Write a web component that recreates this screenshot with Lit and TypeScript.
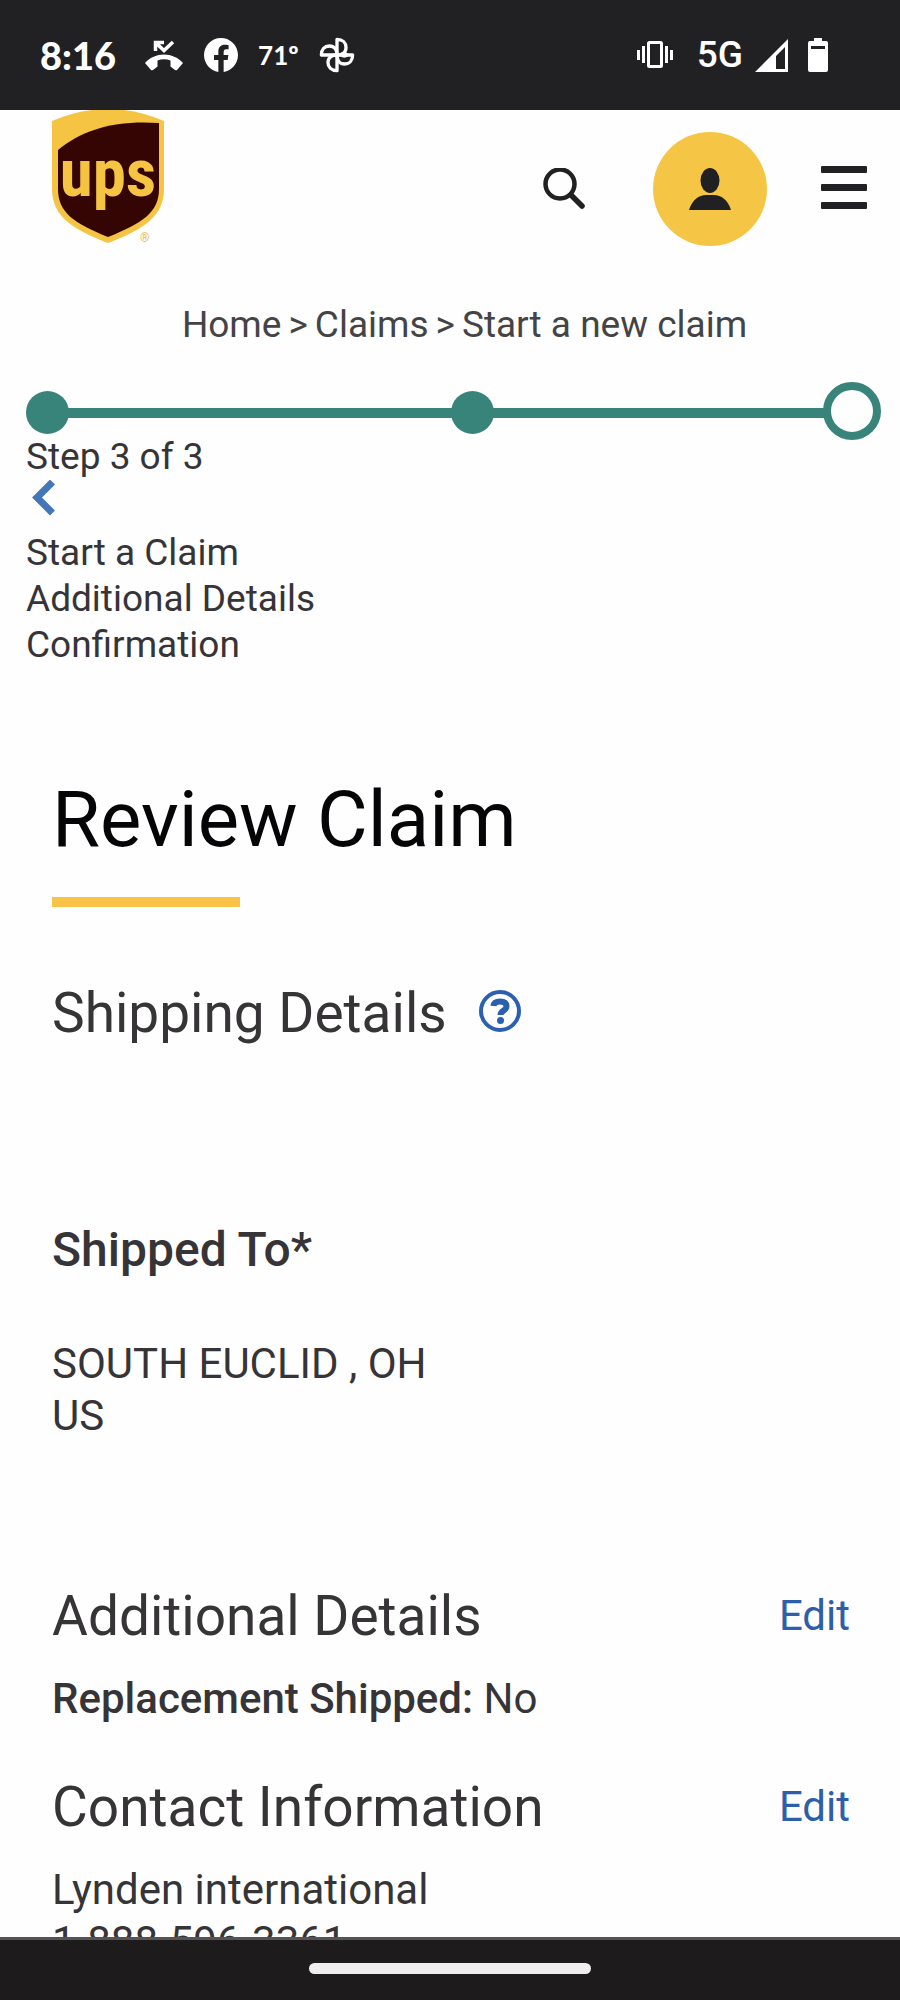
import { LitElement, html, css, svg } from "lit";
import { customElement } from "lit/decorators.js";

@customElement("phone-status")
class PhoneStatus extends LitElement {
  static styles = css`
    :host {
      display: flex;
      justify-content: space-between;
      align-items: center;
      height: 110px;
      padding: 0 64px 0 40px;
      box-sizing: border-box;
      background: #212123;
      color: #fff;
    }
    .group {
      display: flex;
      align-items: center;
    }
    .left {
      gap: 20px;
    }
    .right {
      gap: 12px;
    }
    .clock {
      font: 900 38px/48px Lato, sans-serif;
      padding-right: 8px;
    }
    .temp {
      font: 700 26px/48px Lato, sans-serif;
    }
    .net {
      font: 500 37px/48px Roboto, sans-serif;
      padding-left: 12px;
    }
    svg {
      display: block;
      fill: currentColor;
    }
  `;

  render() {
    return html`
      <div class="group left">
        <span class="clock">8:16</span>
        <svg width="40" height="34" viewBox="0 0 40 34" aria-hidden="true">
          <path d="M1 25C11 13.500 29 13.500 39 25L33 32Q32 32.500 31 32L26.500 28.500V22.500Q20 20 13.500 22.500V28.500L9 32Q8 32.500 7 32Z" />
          <path d="M11.500 13V4.500H20M12 5L20 12.500L29 4" fill="none" stroke="currentColor" stroke-width="3.500" />
        </svg>
        <svg width="34" height="34" viewBox="0 0 24 24" aria-hidden="true">
          <path d="M24 12.070C24 5.400 18.630 0 12 0S0 5.400 0 12.070C0 18.100 4.390 23.100 10.130 24v-8.440H7.080v-3.490h3.050V9.410c0-3.020 1.790-4.690 4.530-4.690 1.310 0 2.680.24 2.680.24v2.970h-1.510c-1.490 0-1.960.93-1.960 1.890v2.250h3.330l-.53 3.490h-2.800V24C19.610 23.100 24 18.100 24 12.070z" />
        </svg>
        <span class="temp">71º</span>
        <svg width="36" height="36" viewBox="0 0 38 38" aria-hidden="true">
          <g fill="none" stroke="currentColor" stroke-width="3.500" stroke-linejoin="round">
            ${[0, 90, 180, 270].map(
              (a) => svg`<path transform="rotate(${a} 19 19)" d="M19 19V2.500C25 2.500 28.500 6 28.500 11C28.500 16 25 19 19 19" />`
            )}
          </g>
          <path d="M21 19Q26 12 32 19Q27 25 21 19Z" />
        </svg>
      </div>
      <div class="group right">
        <svg width="36" height="28" viewBox="0 0 36 28" aria-hidden="true">
          <rect x="11.500" y="1.500" width="13" height="24" rx="1" fill="none" stroke="currentColor" stroke-width="3" />
          <path d="M0 9h3v10H0zM5 5h3v17H5zM28 5h3v17h-3zM33 9h3v10h-3z" />
        </svg>
        <span class="net">5G</span>
        <svg width="33" height="33" viewBox="0 0 33 33" aria-hidden="true">
          <path fill-rule="evenodd" d="M33 0V33H0ZM30 8L21 17V30H30Z" />
        </svg>
        <svg width="36" height="34" viewBox="0 0 36 34" aria-hidden="true">
          <path fill-rule="evenodd" d="M14 0h8v3h4q2 0 2 2v27q0 2-2 2H10q-2 0-2-2V5q0-2 2-2h4zM11 8v3h14V8z" />
        </svg>
      </div>
    `;
  }
}

@customElement("site-header")
class SiteHeader extends LitElement {
  static styles = css`
    :host {
      display: flex;
      justify-content: space-between;
      height: 158px;
      padding: 0 33px 0 52px;
      box-sizing: border-box;
    }
    .logo {
      display: block;
    }
    .logo svg {
      display: block;
    }
    .mark {
      font: 700 67px "Roboto Condensed", "Liberation Sans Narrow", "Liberation Sans", sans-serif;
    }
    .reg {
      font: 400 12px Roboto, sans-serif;
    }
    .tools {
      display: flex;
      align-items: center;
    }
    button {
      display: grid;
      place-items: center;
      padding: 0;
      border: 0;
      background: none;
      color: #212123;
      cursor: pointer;
    }
    .search {
      margin-right: 68px;
    }
    .user {
      width: 114px;
      height: 114px;
      margin-right: 54px;
      border-radius: 50%;
      background: #f5c645;
    }
  `;

  render() {
    return html`
      <a class="logo" href="#home" aria-label="UPS home">
        <svg width="113" height="134" viewBox="0 0 113 134">
          <path fill="#f6c443" d="M0 11Q56 -13 112 11V79C112 106 92 119 56 133C20 119 0 106 0 79Z" />
          <path fill="#340503" d="M6 40C30 20 62 10 107 13V79C107 102 91 113 56 127C21 113 6 102 6 79Z" />
          <text class="mark" x="56" y="86" text-anchor="middle" fill="#f6c443">ups</text>
          <text class="reg" x="88" y="132" fill="#e8bd4c">®</text>
        </svg>
      </a>
      <div class="tools">
        <button class="search" aria-label="Search">
          <svg width="43" height="43" viewBox="0 0 43 43" fill="none" stroke="currentColor" stroke-linecap="round">
            <circle cx="18" cy="16" r="14.500" stroke-width="4.500" />
            <path d="M29 27L40 38" stroke-width="5.500" />
          </svg>
        </button>
        <button class="user" aria-label="My account">
          <svg width="42" height="42" viewBox="0 0 42 42" fill="currentColor">
            <ellipse cx="21" cy="12.500" rx="9.500" ry="12.500" />
            <path d="M0 42C3 32 10 27 17 27H25C32 27 39 32 42 42Z" />
          </svg>
        </button>
        <button aria-label="Menu">
          <svg width="46" height="46" viewBox="0 0 46 46" fill="currentColor">
            <rect width="46" height="7" rx="1" />
            <rect y="18" width="46" height="7" rx="1" />
            <rect y="36" width="46" height="7" rx="1" />
          </svg>
        </button>
      </div>
    `;
  }
}

@customElement("claim-steps")
class ClaimSteps extends LitElement {
  static styles = css`
    :host {
      display: block;
      padding: 43px 19px 0 26px;
      font-size: 37px;
      line-height: 46px;
    }
    ol {
      list-style: none;
      margin: 0;
      padding: 0;
    }
    .track {
      display: flex;
      align-items: center;
      height: 43px;
    }
    .seg {
      display: flex;
      align-items: center;
      flex: 1;
    }
    .seg:first-child {
      flex: 0 0 calc(50% - 3px);
    }
    .seg::before {
      content: "";
      width: 43px;
      height: 43px;
      border-radius: 50%;
      background: #39847a;
    }
    .seg::after {
      content: "";
      flex: 1;
      height: 10px;
      margin: 0 -1px;
      background: #39847a;
    }
    .ring {
      width: 58px;
      height: 58px;
      margin-bottom: 4px;
      box-sizing: border-box;
      border: 8px solid #39847a;
      border-radius: 50%;
    }
    p {
      margin: 0;
    }
    .back {
      display: flex;
      align-items: flex-start;
      height: 50px;
      padding: 0 6px;
      border: 0;
      background: none;
      color: #4476b8;
    }
  `;

  render() {
    return html`
      <ol class="track" aria-hidden="true">
        <li class="seg"></li>
        <li class="seg"></li>
        <li class="ring"></li>
      </ol>
      <p>Step 3 of 3</p>
      <button class="back" aria-label="Previous step">
        <svg width="24" height="37" viewBox="0 0 24 37" fill="none" stroke="currentColor" stroke-width="7">
          <path d="M20.500 2L5 17.500L20.500 33" />
        </svg>
      </button>
      <ol>
        ${["Start a Claim", "Additional Details", "Confirmation"].map((s) => html`<li>${s}</li>`)}
      </ol>
    `;
  }
}

@customElement("app-root")
class AppRoot extends LitElement {
  static styles = css`
    :host {
      display: flex;
      flex-direction: column;
      height: 100vh;
      background: #fefefe;
      color: #363436;
      font-family: Roboto, sans-serif;
    }
    .page {
      flex: 1;
      min-height: 0;
      overflow: hidden;
    }
    .crumbs {
      display: flex;
      justify-content: center;
      gap: 7px;
      padding: 34px 0 0 29px;
      font-size: 37px;
      line-height: 46px;
      color: #444446;
    }
    a {
      color: inherit;
      text-decoration: none;
    }
    main {
      padding: 106px 50px 0 52px;
      font-size: 42px;
      line-height: 52px;
    }
    h1,
    h2,
    h3,
    p,
    address {
      margin: 0;
      font-weight: 400;
      font-style: normal;
    }
    h1 {
      font-size: 78px;
      line-height: 92px;
      color: #050507;
    }
    h1::after {
      content: "";
      display: block;
      width: 188px;
      height: 10px;
      margin-top: 31px;
      background: #f8c347;
    }
    h2 {
      font-size: 55px;
      line-height: 64px;
    }
    h3 {
      padding: 177px 0 60px;
      font-size: 48px;
      line-height: 56px;
      font-weight: 500;
    }
    b {
      font-weight: 500;
    }
    .row {
      display: flex;
      align-items: center;
      justify-content: space-between;
      padding-bottom: 25px;
    }
    .shipping {
      justify-content: flex-start;
      gap: 32px;
      padding: 74px 0 0;
    }
    .additional {
      padding-top: 142px;
    }
    .contact {
      padding-top: 50px;
    }
    .edit {
      color: #2d5fa9;
    }
    .help {
      display: grid;
      padding: 0 0 5px;
      border: 0;
      background: none;
      color: #2b5fb0;
    }
    .gesture {
      display: grid;
      place-items: center;
      height: 63px;
      box-sizing: border-box;
      border-top: 3px solid #555355;
      padding-bottom: 3px;
      background: #1e1b1d;
    }
    .pill {
      width: 282px;
      height: 11px;
      border-radius: 6px;
      background: #f0edef;
    }
  `;

  render() {
    return html`
      <phone-status></phone-status>
      <div class="page">
        <site-header></site-header>
        <nav class="crumbs" aria-label="Breadcrumb">
          <a href="#home">Home</a><span>&gt;</span><a href="#claims">Claims</a><span>&gt;</span><span>Start a new claim</span>
        </nav>
        <claim-steps></claim-steps>
        <main>
          <h1>Review Claim</h1>
          <div class="row shipping">
            <h2>Shipping Details</h2>
            <button class="help" aria-label="Help with shipping details">
              <svg width="42" height="42" viewBox="0 0 42 42" fill="none" stroke="currentColor">
                <circle cx="21" cy="21" r="19" stroke-width="4" />
                <path d="M14.500 16C15 12 18 11.500 21 11.500C25 11.500 27.500 13 27.500 16.500C27.500 20.500 21.500 20.500 21.500 25" stroke-width="6" />
                <circle cx="21.500" cy="30.500" r="3.500" fill="currentColor" stroke="none" />
              </svg>
            </button>
          </div>
          <h3>Shipped To*</h3>
          <address>SOUTH EUCLID , OH<br />US</address>
          <div class="row additional">
            <h2>Additional Details</h2>
            <a class="edit" href="#edit-details">Edit</a>
          </div>
          <p><b>Replacement Shipped:</b> No</p>
          <div class="row contact">
            <h2>Contact Information</h2>
            <a class="edit" href="#edit-contact">Edit</a>
          </div>
          <p>Lynden international</p>
          <p>1-888-596-3361</p>
        </main>
      </div>
      <div class="gesture"><div class="pill"></div></div>
    `;
  }
}
